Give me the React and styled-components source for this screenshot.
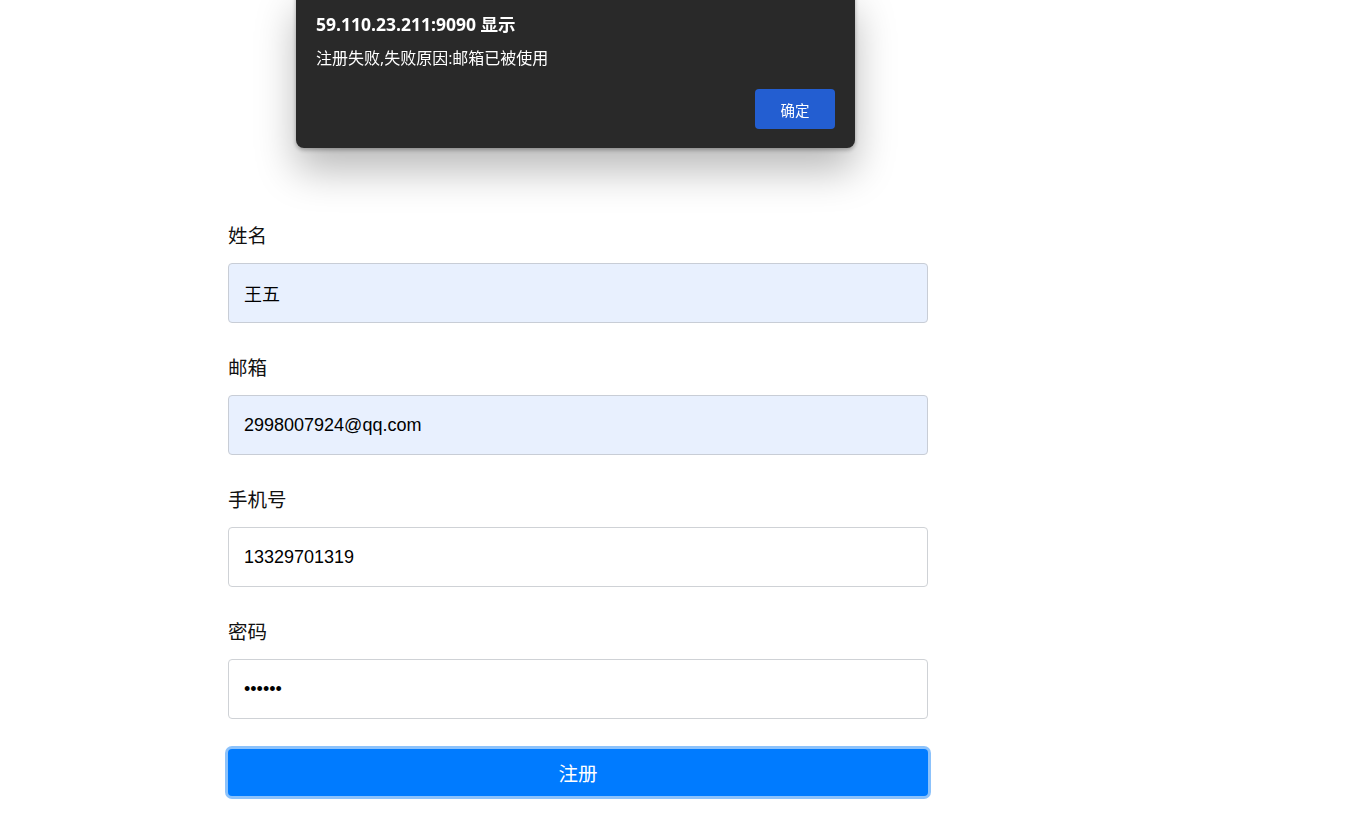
import React from "react";
import styled, { createGlobalStyle } from "styled-components";

const GlobalStyle = createGlobalStyle`
  html, body {
    margin: 0;
    padding: 0;
    background: #fff;
  }
  body {
    font-family: "Liberation Sans", "Noto Sans CJK SC", sans-serif;
    color: #000;
  }
`;

const Page = styled.div`
  min-height: 824px;
  padding: 223px 0 0 228px;
  box-sizing: border-box;
`;

const Form = styled.form`
  width: 700px;
  display: flex;
  flex-direction: column;
`;

const Group = styled.div`
  display: flex;
  flex-direction: column;
  margin-bottom: 32px;
`;

const Label = styled.label`
  font-family: "Noto Sans CJK SC", sans-serif;
  font-size: 19.5px;
  line-height: 24px;
  height: 24px;
  margin-bottom: 16px;
  color: #111;
`;

const Input = styled.input`
  box-sizing: border-box;
  width: 100%;
  height: 60px;
  padding: 0 15px;
  border: 1px solid ${(p) => (p.$filled ? "#c8cdd6" : "#cfd2d6")};
  border-radius: 4px;
  background: ${(p) => (p.$filled ? "#e8f0fe" : "#fff")};
  font-family: "Liberation Sans", "Noto Sans CJK SC", sans-serif;
  font-size: 18px;
  color: #000;
  outline: none;
`;

const Submit = styled.button`
  margin-top: -2px;
  height: 47px;
  width: 100%;
  border: none;
  border-radius: 4px;
  background: #007bff;
  color: #fff;
  font-family: "Noto Sans CJK SC", sans-serif;
  font-size: 19.5px;
  line-height: 46px;
  box-shadow: 0 0 0 3px #8cc2fb;
  cursor: pointer;
`;

const Dialog = styled.div`
  position: fixed;
  top: -12px;
  left: 296px;
  width: 559px;
  height: 160px;
  box-sizing: border-box;
  padding: 24px 20px 19px;
  background: #292929;
  border-radius: 8px;
  box-shadow: 0 22px 40px rgba(0, 0, 0, 0.28), 0 2px 4px rgba(0, 0, 0, 0.3);
  display: flex;
  flex-direction: column;
  font-family: "Open Sans", "Noto Sans CJK SC", sans-serif;
  color: #fff;
`;

const DialogTitle = styled.div`
  font-size: 17.5px;
  font-weight: 700;
  line-height: 24px;
`;

const DialogText = styled.div`
  margin-top: 11px;
  font-size: 16px;
  line-height: 22px;
`;

const DialogActions = styled.div`
  margin-top: auto;
  display: flex;
  justify-content: flex-end;
`;

const OkButton = styled.button`
  width: 80px;
  height: 40px;
  border: none;
  border-radius: 4px;
  background: #235ed1;
  color: #fff;
  font-family: "Noto Sans CJK SC", sans-serif;
  font-size: 14.5px;
`;

const fields = [
  { label: "姓名", value: "王五", filled: true, type: "text" },
  { label: "邮箱", value: "2998007924@qq.com", filled: true, type: "text" },
  { label: "手机号", value: "13329701319", type: "text" },
  { label: "密码", value: "123456", type: "password" },
];

export default function App() {
  return (
    <>
      <GlobalStyle />
      <Page>
        <Form onSubmit={(e) => e.preventDefault()}>
          {fields.map((f) => (
            <Group key={f.label}>
              <Label>{f.label}</Label>
              <Input type={f.type} defaultValue={f.value} $filled={f.filled} />
            </Group>
          ))}
          <Submit type="submit">注册</Submit>
        </Form>
      </Page>
      <Dialog>
        <DialogTitle>59.110.23.211:9090 显示</DialogTitle>
        <DialogText>注册失败,失败原因:邮箱已被使用</DialogText>
        <DialogActions>
          <OkButton>确定</OkButton>
        </DialogActions>
      </Dialog>
    </>
  );
}
